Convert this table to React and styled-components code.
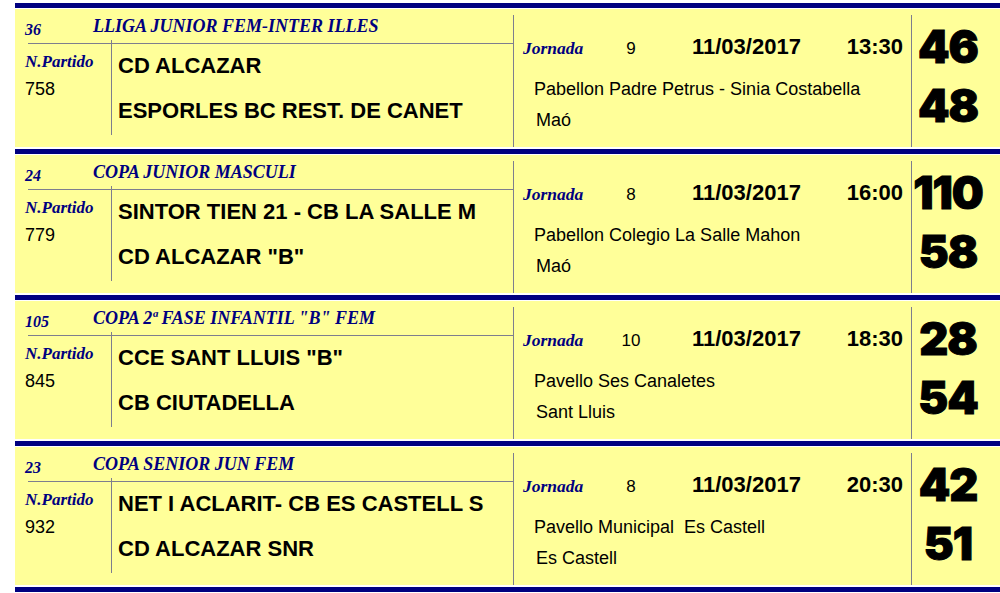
import React from "react";
import styled, { createGlobalStyle } from "styled-components";

const navy = "#000080";
const paper = "#ffff99";
const rule = "#7e7e8e";

const GlobalStyle = createGlobalStyle`
  body {
    margin: 0;
    background: #ffffff;
    overflow: hidden;
  }
`;

const Page = styled.div`
  padding: 3px 0 0 15px;
  width: 985px;
`;

const Bar = styled.div`
  height: 5px;
  background: ${navy};
`;

const Card = styled.div`
  display: flex;
  height: 138px;
  margin: 1px 0 2px;
  background: ${paper};
`;

const Left = styled.div`
  flex: none;
  width: 498px;
  display: flex;
  flex-direction: column;
`;

const Header = styled.div`
  display: flex;
  height: 34px;
  padding-left: 10px;
  font-family: "Liberation Serif", "Times New Roman", serif;
  font-weight: bold;
  font-style: italic;
  color: ${navy};
`;

const HeadNum = styled.div`
  width: 68px;
  padding-top: 11px;
  font-size: 16px;
  line-height: 20px;
`;

const HeadTitle = styled.div`
  padding-top: 7px;
  font-size: 18px;
  line-height: 20px;
  white-space: nowrap;
`;

const Rule = styled.div`
  height: 1px;
  margin-left: 13px;
  background: ${rule};
`;

const Body = styled.div`
  display: flex;
`;

const Info = styled.div`
  width: 86px;
  padding-left: 10px;
`;

const Label = styled.div`
  font-family: "Liberation Serif", "Times New Roman", serif;
  font-weight: bold;
  font-style: italic;
  font-size: 17px;
  line-height: 20px;
  color: ${navy};
  padding-top: ${(p) => p.$top || 0}px;
`;

const Plain = styled.div`
  font-family: "Liberation Sans", Arial, sans-serif;
  font-size: ${(p) => p.$size || 18}px;
  line-height: 20px;
  color: #000;
  margin-top: ${(p) => p.$top || 0}px;
`;

const Teams = styled.div`
  height: 95px;
  margin-top: -4px;
  padding: 13px 0 0 6px;
  box-sizing: border-box;
  border-left: 1px solid ${rule};
  display: flex;
  flex-direction: column;
  gap: 19px;
`;

const Team = styled.div`
  font-family: "Liberation Sans", Arial, sans-serif;
  font-weight: bold;
  font-size: 22px;
  line-height: 26px;
  color: #000;
  white-space: nowrap;
`;

const Mid = styled.div`
  flex: none;
  width: 398px;
  height: 132px;
  margin-top: 6px;
  box-sizing: border-box;
  border-left: 1px solid ${rule};
  padding: 19px 8px 0 9px;
`;

const TopRow = styled.div`
  display: flex;
  align-items: baseline;
  height: 28px;
  line-height: 26px;
`;

const Jornada = styled.span`
  width: 74px;
  font-family: "Liberation Serif", "Times New Roman", serif;
  font-weight: bold;
  font-style: italic;
  font-size: 17.5px;
  color: ${navy};
`;

const Round = styled.span`
  width: 68px;
  text-align: center;
  font-family: "Liberation Sans", Arial, sans-serif;
  font-size: 17px;
`;

const When = styled.span`
  font-family: "Liberation Sans", Arial, sans-serif;
  font-weight: bold;
  font-size: 22px;
  margin-left: ${(p) => p.$left || 0}px;
  flex: ${(p) => (p.$grow ? 1 : "none")};
`;

const Place = styled.div`
  font-family: "Liberation Sans", Arial, sans-serif;
  font-size: 18px;
  line-height: 22px;
  white-space: pre;
  padding-left: ${(p) => p.$indent}px;
  margin-top: ${(p) => p.$top}px;
`;

const Scores = styled.div`
  flex: 1;
  min-width: 0;
  height: 132px;
  margin-top: 6px;
  box-sizing: border-box;
  border-left: 1px solid ${rule};
  padding: 7px 16px 0 0;
  text-align: center;
`;

const Score = styled.div`
  font-family: Inter, "DejaVu Sans", sans-serif;
  font-weight: 900;
  font-size: 45px;
  line-height: 50px;
  letter-spacing: -1px;
  color: #000;
  -webkit-text-stroke: 1px #000;
  white-space: nowrap;
  margin-top: ${(p) => p.$top || 0}px;
`;

const matches = [
  {
    num: "36",
    league: "LLIGA JUNIOR FEM-INTER ILLES",
    partido: "758",
    home: "CD ALCAZAR",
    away: "ESPORLES BC REST. DE CANET",
    jornada: "9",
    time: "13:30",
    venue: "Pabellon Padre Petrus - Sinia Costabella",
    city: "Maó",
    score: ["46", "48"],
  },
  {
    num: "24",
    league: "COPA JUNIOR MASCULI",
    partido: "779",
    home: "SINTOR TIEN 21 - CB LA SALLE M",
    away: 'CD ALCAZAR "B"',
    jornada: "8",
    time: "16:00",
    venue: "Pabellon Colegio La Salle Mahon",
    city: "Maó",
    score: ["110", "58"],
  },
  {
    num: "105",
    league: 'COPA 2ª FASE INFANTIL "B" FEM',
    partido: "845",
    home: 'CCE SANT LLUIS "B"',
    away: "CB CIUTADELLA",
    jornada: "10",
    time: "18:30",
    venue: "Pavello Ses Canaletes",
    city: "Sant Lluis",
    score: ["28", "54"],
  },
  {
    num: "23",
    league: "COPA SENIOR JUN FEM",
    partido: "932",
    home: "NET I ACLARIT- CB ES CASTELL S",
    away: "CD ALCAZAR SNR",
    jornada: "8",
    time: "20:30",
    venue: "Pavello Municipal  Es Castell",
    city: "Es Castell",
    score: ["42", "51"],
  },
];

const Match = ({ m }) => (
  <>
    <Bar />
    <Card>
      <Left>
        <Header>
          <HeadNum>{m.num}</HeadNum>
          <HeadTitle>{m.league}</HeadTitle>
        </Header>
        <Rule />
        <Body>
          <Info>
            <Label $top={8}>N.Partido</Label>
            <Plain $top={7}>{m.partido}</Plain>
          </Info>
          <Teams>
            <Team>{m.home}</Team>
            <Team>{m.away}</Team>
          </Teams>
        </Body>
      </Left>
      <Mid>
        <TopRow>
          <Jornada>Jornada</Jornada>
          <Round>{m.jornada}</Round>
          <When $left={27} $grow>
            11/03/2017
          </When>
          <When>{m.time}</When>
        </TopRow>
        <Place $indent={11} $top={16}>
          {m.venue}
        </Place>
        <Place $indent={13} $top={9}>
          {m.city}
        </Place>
      </Mid>
      <Scores>
        <Score>{m.score[0]}</Score>
        <Score $top={9}>{m.score[1]}</Score>
      </Scores>
    </Card>
  </>
);

export default function App() {
  return (
    <>
      <GlobalStyle />
      <Page>
        {matches.map((m) => (
          <Match key={m.partido} m={m} />
        ))}
        <Bar />
      </Page>
    </>
  );
}
